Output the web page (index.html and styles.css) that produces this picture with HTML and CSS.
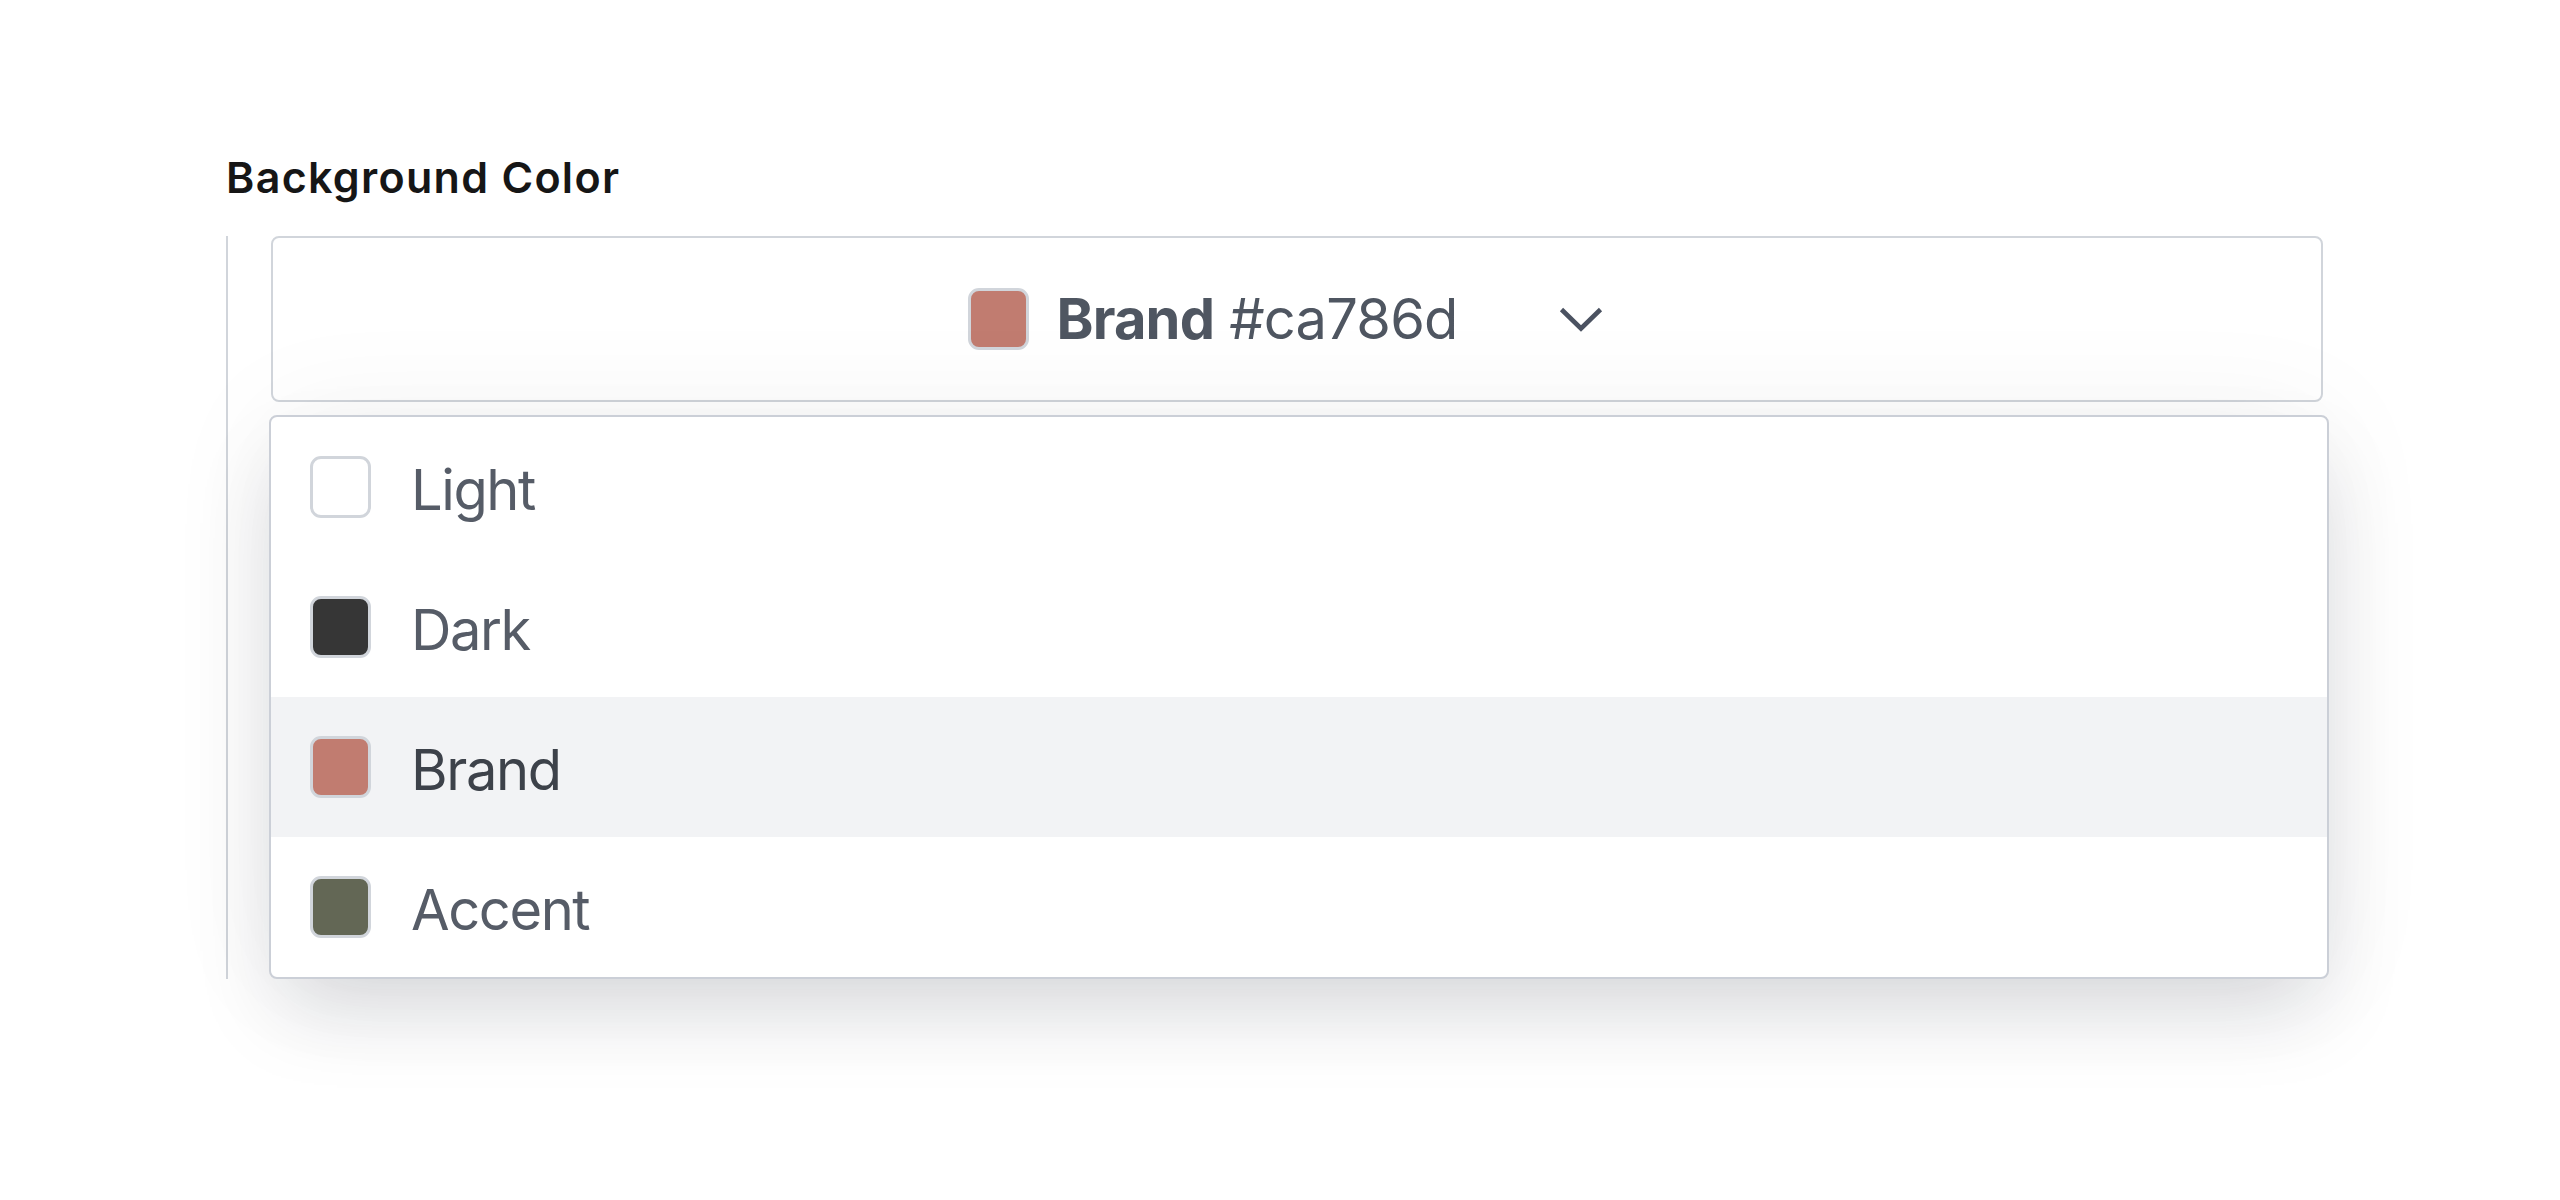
FILE: index.html
```html
<!DOCTYPE html>
<html lang="en">
<head>
<meta charset="utf-8">
<title>Background Color</title>
<link rel="stylesheet" href="styles.css">
</head>
<body>
<div class="field">
  <div class="label">Background Color</div>
  <div class="group">
    <div class="trigger">
      <span class="swatch brand"></span>
      <span class="value"><b>Brand</b> #ca786d</span>
      <svg class="chev" viewBox="0 0 46 26" width="46" height="26" aria-hidden="true"><path d="M3.5 3.5 L23 22.5 L42.5 3.5" fill="none" stroke="#4b5261" stroke-width="4.6" stroke-linecap="butt" stroke-linejoin="miter"/></svg>
    </div>
    <ul class="menu">
      <li class="opt"><span class="swatch light"></span><span class="txt">Light</span></li>
      <li class="opt"><span class="swatch dark"></span><span class="txt">Dark</span></li>
      <li class="opt active"><span class="swatch brand"></span><span class="txt">Brand</span></li>
      <li class="opt"><span class="swatch accent"></span><span class="txt">Accent</span></li>
    </ul>
  </div>
</div>
</body>
</html>
```
FILE: styles.css
```css
* { box-sizing: border-box; }
html, body { margin: 0; padding: 0; background: #ffffff; min-height: 1200px; }
body {
  font-family: Inter, "Noto Sans", "Liberation Sans", sans-serif;
  color: #4b5563;
}
.field {
  padding: 152px 0 0 226px;
  width: 2340px;
}
.label {
  font-size: 43px;
  line-height: 50px;
  font-weight: 600;
  letter-spacing: 1.3px;
  color: #161616;
  margin-bottom: 34px;
}
.group {
  border-left: 2px solid #d1d5db;
  padding-left: 43px;
  display: flex;
  flex-direction: column;
  gap: 13px;
  width: 2099px;
}
.trigger {
  flex: none;
  height: 166px;
  width: 2052px;
  border: 2px solid #d1d5db;
  border-radius: 8px;
  background: #fff;
  display: flex;
  align-items: center;
  justify-content: center;
  padding-right: 22px;
}
.value {
  font-size: 56px;
  line-height: 1;
  letter-spacing: -0.8px;
  color: #4f5661;
  margin-left: 27px;
  white-space: nowrap;
}
.value b { font-weight: 700; }
.chev { margin-left: 100px; display: block; }
.swatch {
  display: inline-block;
  width: 61px;
  height: 62px;
  border: 3px solid #d1d5db;
  border-radius: 11px;
  flex: none;
}
.swatch.brand { background: #c17c70; }
.swatch.dark { background: #363636; }
.swatch.accent { background: #636755; }
.swatch.light { background: #ffffff; }
.menu {
  flex: none;
  list-style: none;
  margin: 0 -4px 0 -2px;
  padding: 0;
  border: 2px solid #cbcfd7;
  border-radius: 8px;
  background: #fff;
  overflow: hidden;
  box-shadow: 0 40px 80px -12px rgba(15, 23, 42, 0.15), 0 0 120px rgba(15, 23, 42, 0.05);
}
.opt {
  height: 140px;
  display: flex;
  align-items: center;
  padding-left: 39px;
  gap: 40px;
  font-size: 56px;
  letter-spacing: -1.4px;
  color: #565c67;
}
.txt { padding-top: 6px; }
.opt.active {
  background: #f2f3f5;
  color: #3d424a;
}
```
